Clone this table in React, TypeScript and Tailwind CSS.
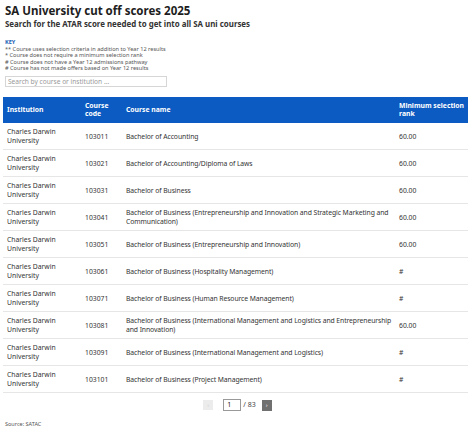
import React from "react";

const rows: [string, string, string][] = [
  ["103011", "Bachelor of Accounting", "60.00"],
  ["103021", "Bachelor of Accounting/Diploma of Laws", "60.00"],
  ["103031", "Bachelor of Business", "60.00"],
  ["103041", "Bachelor of Business (Entrepreneurship and Innovation and Strategic Marketing and Communication)", "60.00"],
  ["103051", "Bachelor of Business (Entrepreneurship and Innovation)", "60.00"],
  ["103061", "Bachelor of Business (Hospitality Management)", "#"],
  ["103071", "Bachelor of Business (Human Resource Management)", "#"],
  ["103081", "Bachelor of Business (International Management and Logistics and Entrepreneurship and Innovation)", "60.00"],
  ["103091", "Bachelor of Business (International Management and Logistics)", "#"],
  ["103101", "Bachelor of Business (Project Management)", "#"],
];

export default function App() {
  return (
    <div
      className="w-[474px] h-[433px] bg-white text-[#222] overflow-hidden"
      style={{ fontFamily: '"Noto Sans", "Open Sans", sans-serif' }}
    >
      <div className="px-[5px] pt-[3px]">
        <div className="text-[11.5px] font-bold leading-[15px] text-[#1d1d1d]">SA University cut off scores 2025</div>
        <div className="text-[7.9px] font-bold leading-[10px] text-[#333] mt-[1px]">
          Search for the ATAR score needed to get into all SA uni courses
        </div>
        <div className="mt-[10px] text-[5.6px] leading-[6.5px] text-[#555]">
          <div className="text-[#1a5fb4] font-bold">KEY</div>
          <div>** Course uses selection criteria in addition to Year 12 results</div>
          <div>* Course does not require a minimum selection rank</div>
          <div># Course does not have a Year 12 admissions pathway</div>
          <div># Course has not made offers based on Year 12 results</div>
        </div>
        <div className="mt-[4.5px] w-[162px] h-[11px] border border-[#d6d6d6] flex items-center px-[2px] text-[6.6px] text-[#999]">
          Search by course or institution ...
        </div>
      </div>
      <div className="mx-[3px] mt-[10px] w-[465px]">
        <div className="grid grid-cols-[78px_41px_273px_1fr] h-[26px] bg-[#0b5bc2] text-white text-[6.8px] font-bold leading-[8px] items-center">
          <div className="pl-[4px]">Institution</div>
          <div className="pl-[4px]">Course<br />code</div>
          <div className="pl-[4px]">Course name</div>
          <div className="pl-[4px]">Minimum selection<br />rank</div>
        </div>
        {rows.map(([code, name, rank]) => (
          <div
            key={code}
            className="grid grid-cols-[78px_41px_273px_1fr] h-[27px] border-b border-[#e6e6e6] text-[6.8px] leading-[9px] text-[#333] items-center"
          >
            <div className="pl-[4px]">Charles Darwin<br />University</div>
            <div className="pl-[4px]">{code}</div>
            <div className="pl-[4px] tracking-[-0.08px]">{name}</div>
            <div className="pl-[4px]">{rank}</div>
          </div>
        ))}
      </div>
      <div className="flex items-center justify-center mt-[6px] ml-[1px]">
        <div className="w-[10px] h-[10px] bg-[#ececec] text-[#ccc] text-[6px] flex items-center justify-center">‹</div>
        <div className="ml-[10px] w-[18px] h-[12px] border border-[#999] text-[7px] text-[#222] flex items-center pl-[3px]">1</div>
        <div className="ml-[2px] text-[7px] text-[#444]">/ 83</div>
        <div className="ml-[6px] w-[10px] h-[11px] bg-[#707070] text-white text-[6px] flex items-center justify-center">›</div>
      </div>
      <div className="px-[5px] mt-[9px] text-[5.5px] text-[#555]">Source: SATAC</div>
    </div>
  );
}
